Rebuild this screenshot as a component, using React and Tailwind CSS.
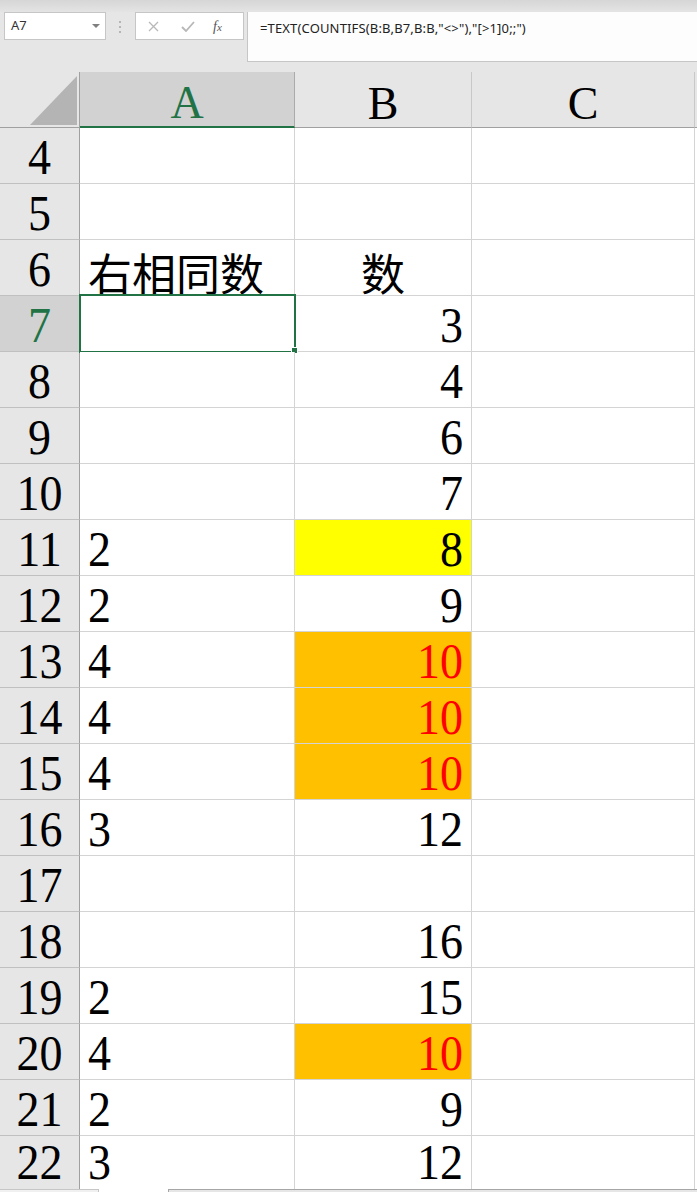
import React from "react";

const rows = [
  { n: 4, a: "", b: "" },
  { n: 5, a: "", b: "" },
  { n: 6, a: "右相同数", b: "数", bCenter: true, cjk: true },
  { n: 7, a: "", b: "3", sel: true },
  { n: 8, a: "", b: "4" },
  { n: 9, a: "", b: "6" },
  { n: 10, a: "", b: "7" },
  { n: 11, a: "2", b: "8", fill: "yellow" },
  { n: 12, a: "2", b: "9" },
  { n: 13, a: "4", b: "10", fill: "orange" },
  { n: 14, a: "4", b: "10", fill: "orange" },
  { n: 15, a: "4", b: "10", fill: "orange" },
  { n: 16, a: "3", b: "12" },
  { n: 17, a: "", b: "" },
  { n: 18, a: "", b: "16" },
  { n: 19, a: "2", b: "15" },
  { n: 20, a: "4", b: "10", fill: "orange" },
  { n: 21, a: "2", b: "9" },
  { n: 22, a: "3", b: "12", last: true },
];

function Txt({ cjk, tall, children }) {
  if (cjk) {
    return (
      <span className="font-['Noto_Sans_CJK_SC',sans-serif] text-[44px] leading-[46px]">{children}</span>
    );
  }
  if (tall) {
    return (
      <span className="inline-block origin-bottom scale-y-[1.08] font-['Liberation_Serif','Times_New_Roman',serif] text-[46px] leading-[46px]">
        {children}
      </span>
    );
  }
  return (
    <span className="font-['Liberation_Serif','Times_New_Roman',serif] text-[46px] leading-[46px]">{children}</span>
  );
}

function FormulaBar() {
  return (
    <div className="flex flex-col">
      <div className="h-[12px] bg-gradient-to-b from-[#d6d6d6] to-[#e4e4e4]" />
      <div className="relative flex h-[60px] items-start bg-[#e6e6e6] font-['Noto_Sans','Open_Sans',sans-serif]">
        <div className="ml-[4px] flex h-[28px] w-[102px] items-center justify-between border border-[#c6c6c6] bg-white pl-[6px] pr-[5px]">
          <span className="text-[13px] text-[#333]">A7</span>
          <svg width="8" height="5" viewBox="0 0 8 5">
            <path d="M0 0 L8 0 L4 4 Z" fill="#808080" />
          </svg>
        </div>
        <div className="ml-[13px] mt-[9px] flex flex-col gap-[3px]">
          <div className="h-[2px] w-[2px] bg-[#b5b5b5]" />
          <div className="h-[2px] w-[2px] bg-[#b5b5b5]" />
          <div className="h-[2px] w-[2px] bg-[#b5b5b5]" />
        </div>
        <div className="ml-[14px] flex h-[28px] w-[109px] items-center border border-[#c6c6c6] bg-white">
          <svg className="ml-[12px]" width="11" height="11" viewBox="0 0 11 11">
            <path d="M1 1 L10 10 M10 1 L1 10" stroke="#b8b8b8" strokeWidth="1.3" />
          </svg>
          <svg className="ml-[22px]" width="14" height="11" viewBox="0 0 14 11">
            <path d="M1 6 L5 10 L13 1" stroke="#b8b8b8" strokeWidth="1.8" fill="none" />
          </svg>
          <span className="ml-[18px] font-['Liberation_Serif',serif] text-[14px] italic text-[#555]">
            f<span className="text-[11px]">x</span>
          </span>
        </div>
        <div className="ml-[3px] h-[50px] flex-1 border-b border-l border-[#c6c6c6] bg-[#fdfdfd] pl-[12px] pt-[3px]">
          <span className="text-[13px] tracking-[0.15px] text-[#222]">=TEXT(COUNTIFS(B:B,B7,B:B,"&lt;&gt;"),"[&gt;1]0;;")</span>
        </div>
      </div>
    </div>
  );
}

function HeaderRow() {
  return (
    <div className="flex h-[56px]">
      <div className="relative flex w-[80px] items-end border-b border-r border-[#a0a0a0] bg-[#e6e6e6]">
        <svg className="absolute left-[30px] top-[4px]" width="47" height="49" viewBox="0 0 47 49">
          <path d="M47 0 L47 49 L0 49 Z" fill="#b4b4b4" />
        </svg>
      </div>
      <div className="flex w-[215px] items-end justify-center border-b-2 border-r border-b-[#217346] border-r-[#ababab] bg-[#d2d2d2] text-[#217346]">
        <Txt>A</Txt>
      </div>
      <div className="flex w-[177px] items-end justify-center border-b border-r border-b-[#a0a0a0] border-r-[#c8c8c8] bg-[#e6e6e6] text-black">
        <Txt>B</Txt>
      </div>
      <div className="flex w-[223px] items-end justify-center border-b border-r border-b-[#a0a0a0] border-r-[#c8c8c8] bg-[#e6e6e6] text-black">
        <Txt>C</Txt>
      </div>
      <div className="flex-1 border-b border-[#a0a0a0] bg-[#e6e6e6]" />
    </div>
  );
}

function Row({ r }) {
  const fillCls =
    r.fill === "yellow"
      ? "bg-[#ffff00] text-black"
      : r.fill === "orange"
      ? "bg-[#ffc000] text-[#ff0000]"
      : "bg-white text-black";
  const h = r.last ? "h-[53px]" : "h-[56px]";
  const bb = r.last ? "pb-[1px]" : "border-b";
  return (
    <div className={`flex ${h} shrink-0`}>
      <div
        className={`flex w-[80px] items-end justify-center ${bb} border-r border-b-[#c0c0c0] border-r-[#a0a0a0] ${
          r.sel ? "bg-[#d2d2d2] text-[#217346]" : "bg-[#e6e6e6] text-black"
        }`}
      >
        <Txt tall>{r.n}</Txt>
      </div>
      <div className={`relative flex w-[215px] items-end ${bb} border-r border-[#d4d4d4] bg-white pl-[8px] text-black`}>
        <Txt cjk={r.cjk} tall>
          {r.a}
        </Txt>
        {r.sel && (
          <>
            <div className="absolute left-[-1px] top-[-2px] h-[59px] w-[217px] border-2 border-[#217346]" />
            <div className="absolute left-[211px] top-[51px] h-[7px] w-[7px] border border-white bg-[#217346]" />
          </>
        )}
      </div>
      <div
        className={`flex w-[177px] items-end ${bb} border-r border-[#d4d4d4] ${
          r.bCenter ? "justify-center" : "justify-end pr-[8px]"
        } ${fillCls}`}
      >
        <Txt cjk={r.cjk} tall>
          {r.b}
        </Txt>
      </div>
      <div className={`w-[223px] ${bb} border-r border-[#d4d4d4] bg-white`} />
      <div className="flex-1 bg-white" />
    </div>
  );
}

export default function App() {
  return (
    <div className="flex h-[1192px] w-[697px] flex-col overflow-hidden bg-white">
      <FormulaBar />
      <HeaderRow />
      <div className="flex flex-1 flex-col overflow-hidden">
        {rows.map((r) => (
          <Row key={r.n} r={r} />
        ))}
      </div>
      <div className="flex h-[3px] shrink-0">
        <div className="w-[99px] border-r border-t border-[#c6c6c6] bg-[#f0f0f0]" />
        <div className="w-[69px] bg-white" />
        <div className="flex-1 border-l border-t border-[#a6a6a6] bg-[#e6e6e6]" />
      </div>
    </div>
  );
}
